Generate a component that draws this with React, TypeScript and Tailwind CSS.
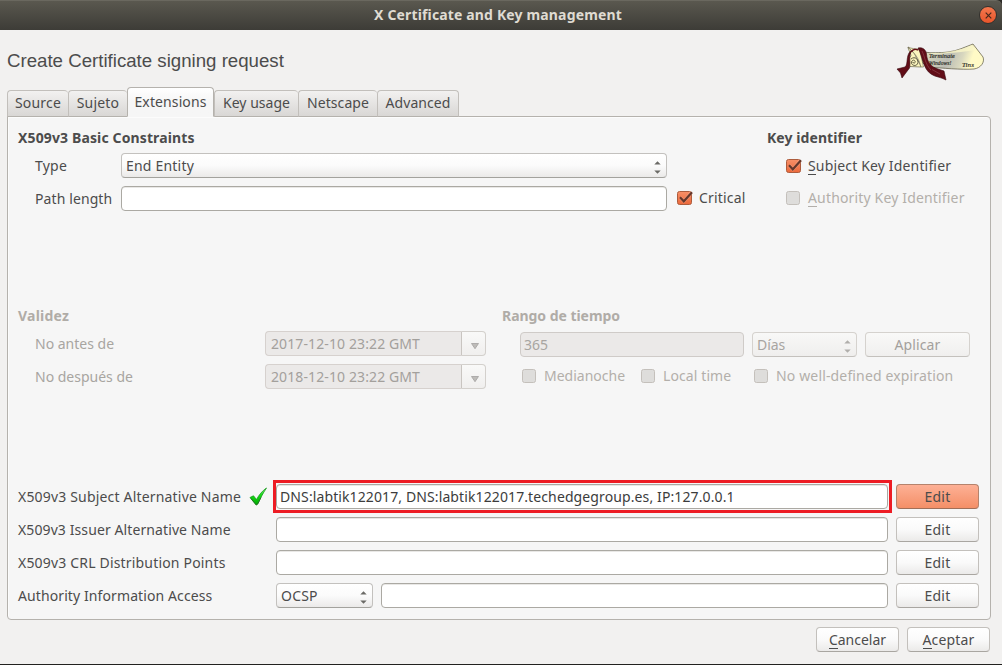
import type { ReactNode } from "react";

const tabs = [
  { label: "Source", cls: "w-[61px]", tracking: "tracking-[0.18px]" },
  { label: "Sujeto", cls: "w-[59px]", tracking: "tracking-[0.19px]" },
  { label: "Extensions", cls: "w-[87px]", tracking: "tracking-[0.11px]", active: true },
  { label: "Key usage", cls: "w-[84px]", tracking: "tracking-[0.02px]" },
  { label: "Netscape", cls: "w-[79px]", tracking: "tracking-[0.08px]" },
  { label: "Advanced", cls: "w-[82px]", tracking: "tracking-[0.08px]" },
];

function Spin({ disabled }: { disabled?: boolean }) {
  return (
    <svg width="7" height="13" viewBox="0 0 7 13" className={disabled ? "mt-1 fill-[#b0aeab]" : "mt-1 fill-[#6b6a66]"}>
      <path d="M0.3 3.5 3.5 0.3l3.2 3.2zM0.3 9.5h6.4L3.5 12.7z" />
    </svg>
  );
}

function Combo({ label, width, disabled, tracking = "" }: { label: string; width: string; disabled?: boolean; tracking?: string }) {
  return (
    <div
      className={`flex h-[25px] items-center justify-between rounded-[4px] border pr-[5px] pl-1 ${width} ${tracking} ${
        disabled
          ? "border-[#d5d2ce] border-b-[#c4c1bd] bg-linear-to-b from-[#f8f8f7] to-[#efeeed] text-[#a8a5a1]"
          : "border-[#c3c1be] border-b-[#a3a29d] bg-linear-to-b from-white via-[#fbfbfb] to-[#ebeae9]"
      }`}
    >
      <span>{label}</span>
      <Spin disabled={disabled} />
    </div>
  );
}

function Field({ children, width }: { children?: ReactNode; width: string }) {
  return (
    <div className={`flex h-[25px] items-center rounded-[4px] border border-[#aba9a3] bg-white pl-[3px] shadow-[inset_0_1px_0_#e9e8e6] ${width}`}>
      {children}
    </div>
  );
}

function Button({ children, variant = "normal", width = "w-[83px]" }: { children: ReactNode; variant?: "normal" | "hot" | "disabled"; width?: string }) {
  const look = {
    normal: "border-[#c3c0bc] border-b-[#a9a6a1] bg-linear-to-b from-white via-[#fafafa] to-[#ebeae9]",
    hot: "border-[#b5836c] border-b-[#a06f58] bg-linear-to-b from-[#fdb095] to-[#f48f67]",
    disabled: "border-[#d5d2ce] border-b-[#c4c1bd] bg-linear-to-b from-[#f9f9f8] to-[#f0efee] text-[#a3a09c]",
  }[variant];
  return <button className={`flex h-[25px] items-center justify-center rounded-[4px] border ${width} ${look}`}>{children}</button>;
}

function Check({ checked, children, width = "" }: { checked?: boolean; children: ReactNode; width?: string }) {
  return (
    <label className={`flex h-[25px] items-center ${checked ? "" : "text-[#b3afaa]"} ${width}`}>
      {checked ? (
        <svg width="16" height="16" viewBox="0 0 16 16" className="mr-1.5">
          <defs>
            <linearGradient id="box" x2="0" y2="1">
              <stop stopColor="#f79068" />
              <stop offset="1" stopColor="#ec683a" />
            </linearGradient>
          </defs>
          <rect x="0.5" y="1.5" width="14" height="13" rx="2" fill="url(#box)" stroke="#ac5c3d" />
          <path d="M3.3 7.5 6.8 11.3 14.6 2.3" fill="none" stroke="#fbb79d" strokeWidth="3.4" opacity="0.45" />
          <path d="M3 7.2 6.8 11.3 15 2.2" fill="none" stroke="#64372b" strokeWidth="2.2" />
        </svg>
      ) : (
        <span className="mr-[8px] h-[14px] w-[14px] rounded-[2.5px] border border-[#c4c0bb] bg-[#dedddb]" />
      )}
      <span>{children}</span>
    </label>
  );
}

function DateCombo({ value }: { value: string }) {
  return (
    <div className="flex h-[25px] w-[221px] text-[#a3a09c]">
      <div className="flex w-[196px] items-center rounded-l-[4px] border border-r-0 border-[#d6d1ce] bg-[#ebe9e8] pl-[5px] tracking-[0.11px]">{value}</div>
      <div className="flex w-[25px] items-center justify-center rounded-r-[4px] border border-[#d3d0cc] border-l-[#c9c5c1] bg-linear-to-b from-[#f9f9f8] to-[#f0efee]">
        <svg width="8" height="6" viewBox="0 0 8 6" className="mt-[4px] ml-[2px]">
          <path d="M0.5 0.5h7L4 5.7z" fill="#bebcb9" stroke="#a3a19f" strokeWidth="0.8" />
        </svg>
      </div>
    </div>
  );
}

function Mnemonic({ text }: { text: string }) {
  return (
    <>
      <span className="inline-block h-[20px] border-b border-current leading-[21px]">{text[0]}</span>
      {text.slice(1)}
    </>
  );
}

function Scroll() {
  return (
    <svg width="90" height="40" viewBox="0 0 90 40">
      <defs>
        <linearGradient id="paper" x2="1" y2="0.15">
          <stop stopColor="#fbf6c5" />
          <stop offset="0.2" stopColor="#cfcfba" />
          <stop offset="0.5" stopColor="#bcbdb4" />
          <stop offset="0.72" stopColor="#d9d8bf" />
          <stop offset="0.88" stopColor="#fffac6" />
        </linearGradient>
      </defs>
      <path d="M28 10C34 11 44 11 52 10 61 9 69 5 77 2L87 15C89 20 85 26 78 27 66 28 46 26 31 25L26 20z" fill="url(#paper)" stroke="#5a563f" strokeWidth="0.7" />
      <path d="M34 10.800C46 12 62 9 76 3L80 8C66 10 48 12 35 12z" fill="#fbf7c8" opacity="0.8" />
      <path d="M12 5C14 9 18 9 20 15 22 19 24 22 25 25L14 24.500C11 22 12 16 15 14 15 11 12 8 12 5z" fill="#fbf5bd" stroke="#6a654a" strokeWidth="0.7" />
      <path d="M12 5C18 8 21 5 24 9L27.500 25H25C23 18 21 13 12 5z" fill="#fbf5bd" stroke="#6a654a" strokeWidth="0.6" />
      <path d="M22 6C27 5 30 8 30.500 12 31 20 35 25 42 27L48 29 50 38C45 35 39 35 35 32 27 27 27 15 22 6z" fill="#620d17" stroke="#35070d" strokeWidth="0.6" />
      <path d="M26 9C29 15 29 22 35 28M36 27.500 44 32" fill="none" stroke="#8c434c" strokeWidth="0.7" />
      <path d="M16 9C12 13 15 20 13.500 26L6 36 4.500 31 1 27 9 25C12.500 22 9.500 14 14.500 9z" fill="#620d17" stroke="#35070d" strokeWidth="0.6" />
      <path d="M15.500 9.500C17 7.500 20 7 22 8" fill="none" stroke="#620d17" strokeWidth="1.6" />
      <path d="M15 17C19 13.500 23.500 18 21.500 22 19 25.500 13.500 22 16 19 18 16.500 20.500 20 18.500 21L16.500 20.500" fill="none" stroke="#504c36" strokeWidth="0.9" />
      <g fill="#1f1f1a" stroke="#1f1f1a" strokeWidth="0.15" fontFamily="Liberation Serif, serif" fontStyle="italic" fontSize="5.8">
        <text x="33" y="16.300" textLength="26" lengthAdjust="spacingAndGlyphs">Terminate</text>
        <text x="33" y="23" textLength="22.500" lengthAdjust="spacingAndGlyphs">Windows!</text>
        <text x="66" y="25" textLength="12" lengthAdjust="spacingAndGlyphs" fontSize="7">Tins</text>
      </g>
    </svg>
  );
}

const fieldRows = [
  { label: "X509v3 Issuer Alternative Name", tracking: "tracking-[0.1px]" },
  { label: "X509v3 CRL Distribution Points", tracking: "tracking-[0.18px]" },
];

export default function App() {
  return (
    <div className="bg-[#2a2a26]">
      <div className="flex h-[665px] w-[1002px] flex-col border-b border-[#22221f] bg-[#f2f1f0] font-['Noto_Sans',sans-serif] text-[14px] leading-5 tracking-[0.1px] whitespace-nowrap text-[#4c4c4c]">
        <header className="flex h-[30px] shrink-0 bg-[#2d2c28]">
          <div className="flex flex-1 items-center rounded-tr-[6px] border-t border-[#6a685f] bg-linear-to-b from-[#5a584f] to-[#3d3c37] pr-[5px] pb-px pl-[17px]">
            <h1 className="flex-1 text-center text-[14px] font-bold tracking-[0.15px] text-[#dfdbd2]">X Certificate and Key management</h1>
            <button className="flex h-[18px] w-[18px] items-center justify-center rounded-full border border-[#33312d] bg-linear-to-b from-[#f4774d] to-[#e8552a]">
              <svg width="7" height="7" viewBox="0 0 7 7">
                <path d="M0.7 0.7 6.3 6.3M6.3 0.7 0.7 6.3" stroke="#46281c" strokeWidth="1.2" />
              </svg>
            </button>
          </div>
        </header>

        <div className="flex h-[57px] shrink-0 justify-between pr-[16px] pl-[7px]">
          <h2 className="pt-[19px] font-['Liberation_Sans',sans-serif] text-[18.67px] leading-[24px] tracking-normal">Create Certificate signing request</h2>
          <div className="pt-[12px]">
            <Scroll />
          </div>
        </div>

        <nav className="z-10 -mb-px ml-[7px] flex h-[30px] shrink-0 items-end">
          {tabs.map((t, i) => (
            <div
              key={t.label}
              className={`flex justify-center rounded-t-[4px] border ${t.cls} ${t.tracking} ${
                t.active
                  ? "h-[30px] border-[#b5b2ad] border-b-[#f6f6f6] bg-linear-to-b from-white to-[#f6f6f6] to-50% pt-[4px]"
                  : `h-[27px] border-[#c2bfbb] border-b-[#b5b2ad] bg-linear-to-b from-[#f2f1f0] to-[#d9d7d5] pt-[2px] ${i === 5 ? "" : "border-r-0"}`
              }`}
            >
              {t.label}
            </div>
          ))}
        </nav>

        <main className="mr-[11px] ml-[7px] flex h-[504px] shrink-0 flex-col rounded-[4px] rounded-tl-none border border-[#b5b2ad] bg-[#f6f6f6] pt-[9px] pl-[10px] shadow-[inset_1px_1px_0_#fcfcfc]">
          <section className="flex h-[178px]">
            <div className="w-[749px]">
              <h3 className="h-[27px] pt-[2px] font-bold tracking-[0.13px]">X509v3 Basic Constraints</h3>
              <div className="flex items-center pl-[17px]">
                <span className="w-[86px] tracking-[0.21px]">Type</span>
                <Combo label="End Entity" width="w-[546px]" tracking="tracking-[0.2px]" />
              </div>
              <div className="mt-2 flex items-center pl-[17px]">
                <span className="w-[86px]">Path length</span>
                <Field width="w-[546px]" />
                <div className="-mt-[2px] ml-[10px] tracking-[0.18px]">
                  <Check checked>Critical</Check>
                </div>
              </div>
            </div>
            <div>
              <h3 className="h-[27px] pt-[2px] font-bold tracking-[0.07px]">Key identifier</h3>
              <div className="flex flex-col gap-[7px] pl-[19px] tracking-[0.16px]">
                <Check checked>
                  <Mnemonic text="Subject Key Identifier" />
                </Check>
                <Check>
                  <Mnemonic text="Authority Key Identifier" />
                </Check>
              </div>
            </div>
          </section>

          <section className="flex h-[180px] text-[#a8a5a1]">
            <div className="w-[484px]">
              <h3 className="h-[27px] pt-[2px] font-bold tracking-[0.21px] text-[#b0aca7]">Validez</h3>
              <div className="flex items-center pl-[17px]">
                <span className="w-[230px] tracking-normal">No antes de</span>
                <DateCombo value="2017-12-10 23:22 GMT" />
              </div>
              <div className="mt-2 flex items-center pl-[17px]">
                <span className="w-[230px] tracking-normal">No después de</span>
                <DateCombo value="2018-12-10 23:22 GMT" />
              </div>
            </div>
            <div>
              <h3 className="h-[28px] pt-[2px] font-bold tracking-[-0.04px] text-[#b0aca7]">Rango de tiempo</h3>
              <div className="flex gap-2 pl-[18px]">
                <div className="flex h-[25px] w-[224px] items-center rounded-[4px] border border-[#cfcbc8] bg-[#ebe9e8] pl-[3px] tracking-normal">365</div>
                <Combo label="Días" width="w-[105px]" disabled tracking="tracking-[-0.08px]" />
                <Button width="w-[105px]" variant="disabled">
                  Aplicar
                </Button>
              </div>
              <div className="mt-[6px] flex pl-[20px]">
                <Check width="w-[119px] tracking-normal">Medianoche</Check>
                <Check width="w-[113px]">Local time</Check>
                <Check width="tracking-[0.15px]">No well-defined expiration</Check>
              </div>
            </div>
          </section>

          <section className="flex flex-col gap-2">
            <div className="flex items-center">
              <span className="w-[230px] tracking-[0.18px]">X509v3 Subject Alternative Name</span>
              <svg width="20" height="20" viewBox="0 0 20 20" className="mr-[5px]">
                <defs>
                  <linearGradient id="tick" x2="0" y2="1">
                    <stop stopColor="#9beb9b" />
                    <stop offset="0.4" stopColor="#18e018" />
                    <stop offset="1" stopColor="#00a800" />
                  </linearGradient>
                </defs>
                <path d="M2 10.500 5.500 8.800 8.500 12.500C11 8 14 4 18.500 1 15 6 12 12 9.800 17L8.200 18z" fill="url(#tick)" stroke="#119c16" strokeWidth="0.8" />
                <path d="M3 11.500 8.300 18 10 16.500 13 10.500" fill="none" stroke="#225d22" strokeWidth="0.7" />
              </svg>
              <div className="-my-1 border-3 border-[#ed1c24] bg-[#f6f6f6] py-px pr-px">
                <Field width="w-[612px]">
                  <span className="tracking-[0.11px] text-[#3c3c3c]">DNS:labtik122017, DNS:labtik122017.techedgegroup.es, IP:127.0.0.1</span>
                </Field>
              </div>
              <div className="ml-1 tracking-[0.24px]">
                <Button variant="hot">Edit</Button>
              </div>
            </div>
            {fieldRows.map((r) => (
              <div key={r.label} className="flex items-center">
                <span className={`w-[258px] ${r.tracking}`}>{r.label}</span>
                <Field width="w-[612px]" />
                <div className="ml-2 tracking-[0.24px]">
                  <Button>Edit</Button>
                </div>
              </div>
            ))}
            <div className="flex items-center">
              <span className="w-[258px]">Authority Information Access</span>
              <Combo label="OCSP" width="w-[97px]" tracking="tracking-[0.2px]" />
              <div className="ml-2">
                <Field width="w-[507px]" />
              </div>
              <div className="ml-2 tracking-[0.24px]">
                <Button>Edit</Button>
              </div>
            </div>
          </section>
        </main>

        <footer className="mt-[7px] flex justify-end gap-2 pr-[12px]">
          <Button>
            <span className="tracking-normal">
              <Mnemonic text="Cancelar" />
            </span>
          </Button>
          <Button>
            <span className="tracking-[0.16px]">
              <Mnemonic text="Aceptar" />
            </span>
          </Button>
        </footer>
      </div>
    </div>
  );
}
